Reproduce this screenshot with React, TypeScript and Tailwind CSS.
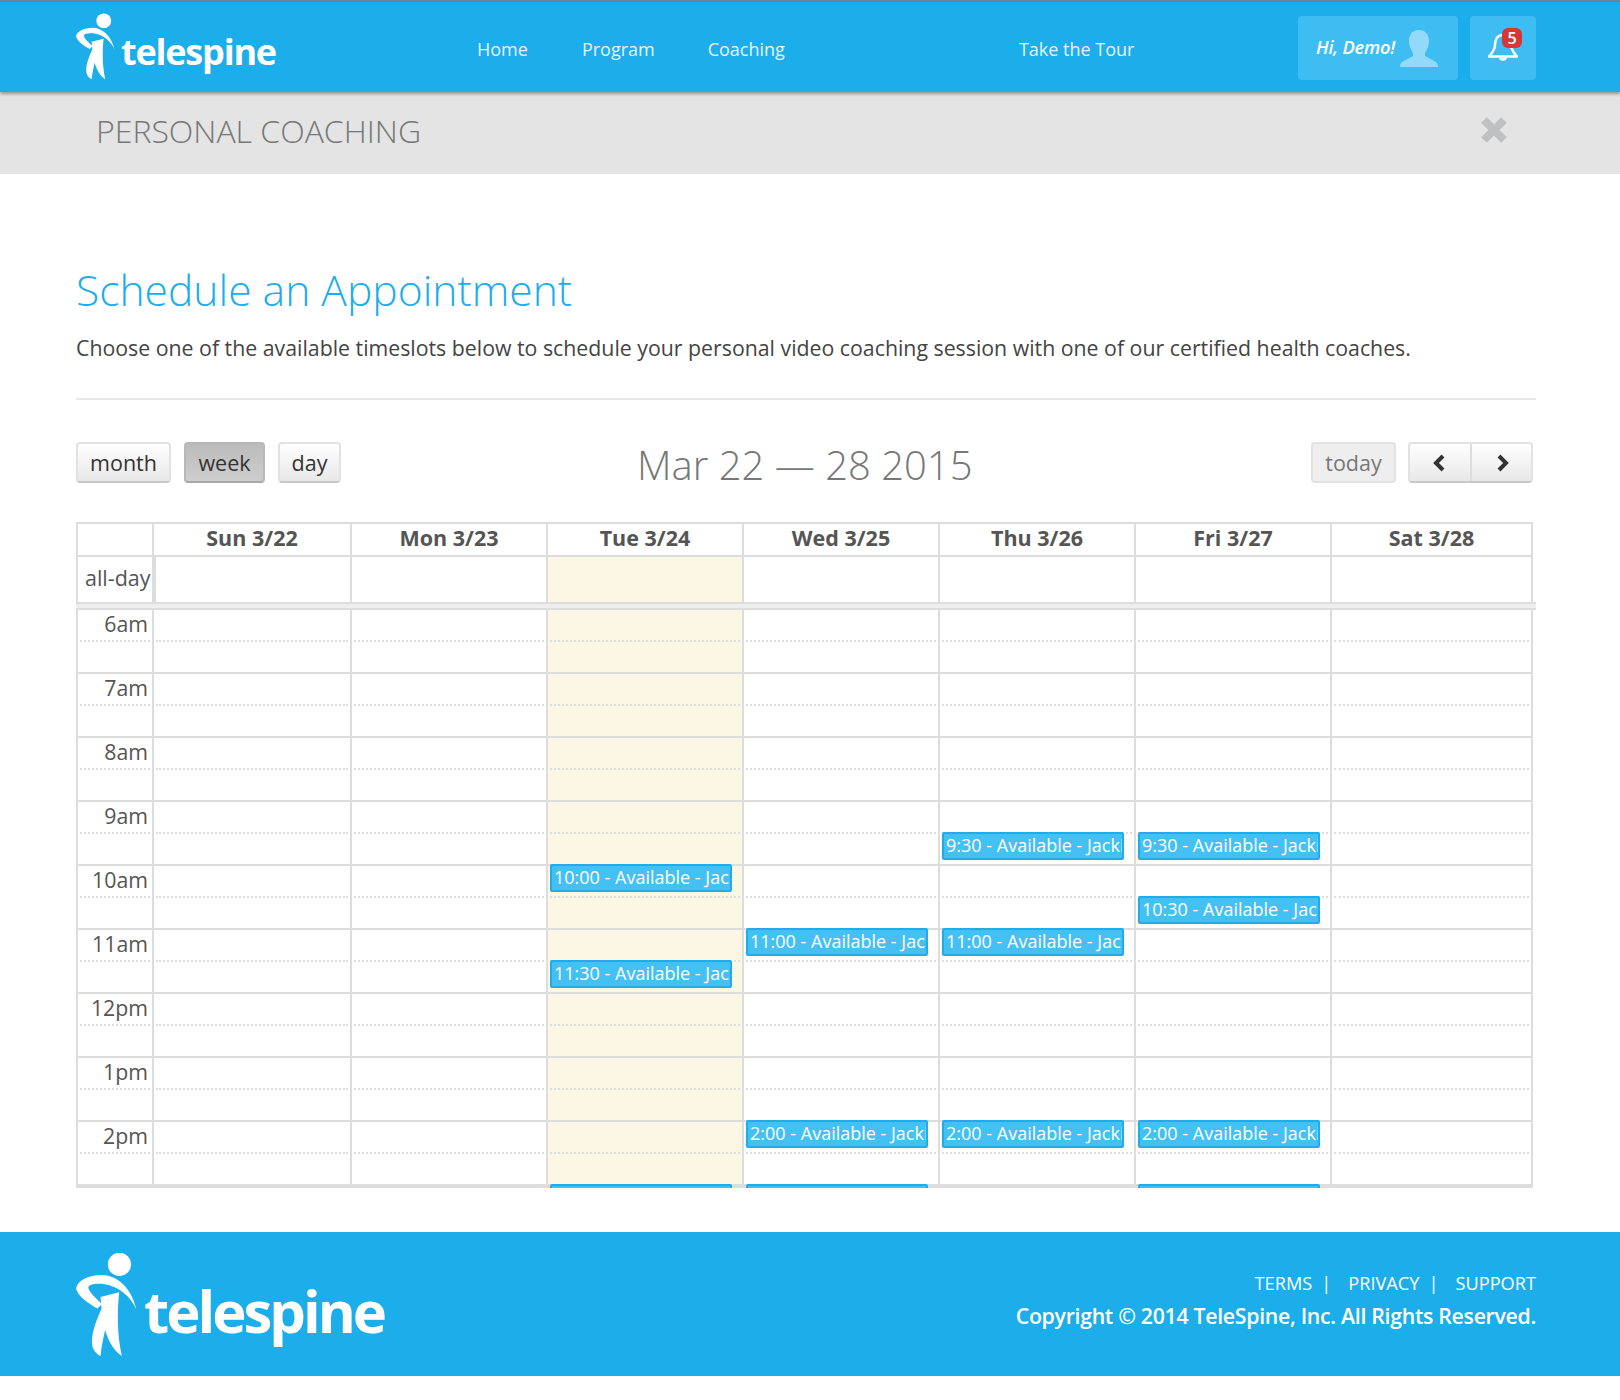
import React from "react";

const Figure = ({ className }: { className: string }) => (
  <svg viewBox="48 458 184 310" className={className} fill="#fff">
    <circle cx="179" cy="492" r="35" />
    <path d="M48 565C52 540 85 525 125 524C170 524 215 560 230 628C215 590 175 556 130 551C105 549 85 553 85 562C87 575 105 592 127 612L112 625C85 610 55 590 48 565Z" />
    <path d="M122 590L178 576C172 640 172 700 186 768C165 755 145 725 136 690C130 715 124 745 122 768C105 760 96 745 96 725C96 690 115 650 125 625Z" />
  </svg>
);

const Btn = ({ children, className = "" }: { children: React.ReactNode; className?: string }) => (
  <div className={`flex h-[41px] items-center justify-center rounded-[4px] border-2 pt-[2px] text-[21.5px] text-[#333] ${className}`}>
    {children}
  </div>
);

const idle = "border-[#e2e2e2] border-b-[#c8c8c8] bg-gradient-to-b from-white to-[#e8e8e8]";
const cols = ["Sun 3/22", "Mon 3/23", "Tue 3/24", "Wed 3/25", "Thu 3/26", "Fri 3/27", "Sat 3/28"];
const gridCols = "grid grid-cols-[76px_198px_196px_196px_196px_196px_196px_203px]";
const hours = ["6am", "7am", "8am", "9am", "10am", "11am", "12pm", "1pm", "2pm"];
const events: Record<number, [number, string][]> = {
  2: [[8, "10:00"], [11, "11:30"], [18, "3:00"]],
  3: [[10, "11:00"], [16, "2:00"], [18, "3:00"]],
  4: [[7, "9:30"], [10, "11:00"], [16, "2:00"]],
  5: [[7, "9:30"], [9, "10:30"], [16, "2:00"], [18, "3:00"]],
};

const Column = ({ index }: { index: number }) => {
  const isTime = index < 0;
  const last = index === 6;
  return (
    <div className={`relative flex flex-col border-l-2 border-[#ddd] ${last ? "border-r-2" : ""} ${index === 2 ? "bg-[#fcf7e4]" : ""}`}>
      {Array.from({ length: 18 }).map((_, i) => {
        const odd = i % 2 === 1;
        return (
          <div key={i} className={`shrink-0 ${i === 0 ? "h-[30px]" : "h-[32px]"} ${!odd && i > 0 ? "border-t-2 border-[#ddd]" : ""}`}>
            {odd && <div className="mx-[2px] border-t-2 border-dotted border-[#ddd]" />}
            {!odd && isTime && (
              <div className="h-[30px] pr-[4px] text-right text-[21.3px] leading-[28px] text-[#555]">{hours[i / 2]}</div>
            )}
          </div>
        );
      })}
      <div className="h-[4px] shrink-0 bg-[#ddd]" />
      {(events[index] || []).map(([n, t]) => (
        <div
          key={t}
          className="absolute left-[2px] h-[28px] w-[182px] overflow-hidden whitespace-nowrap rounded-[2px] border-2 border-[#1cadeb] bg-[#45c0f2] px-[2px] text-[18px] font-medium leading-[22px] text-white"
          style={{ top: 32 * n - 2 }}
        >
          {t} - Available - Jackie
        </div>
      ))}
    </div>
  );
};

export default function App() {
  return (
    <div className="min-h-[1400px] bg-white font-['Open_Sans',sans-serif]">
      <header className="relative z-10 flex h-[92px] border-t-2 border-[#6f8290] bg-[#1cadeb] shadow-[0_2px_3px_rgba(0,0,0,0.35)]">
        <div className="ml-[76px] flex w-[200px] items-start">
          <Figure className="mt-[11px] h-[67px] w-[39px] shrink-0" />
          <span className="ml-[6px] mt-[25px] text-[36px] font-bold leading-[50px] tracking-[-1.2px] text-white">telespine</span>
        </div>
        <nav className="flex text-[18px] leading-[94px] text-[#e4f5fd]">
          <span className="ml-[201px]">Home</span>
          <span className="ml-[54px]">Program</span>
          <span className="ml-[53px]">Coaching</span>
          <span className="ml-[234px]">Take the Tour</span>
        </nav>
        <div className="ml-auto mr-[84px] mt-[14px] flex h-[64px] gap-[12px]">
          <div className="flex w-[160px] items-center rounded-[4px] bg-[#3dbdf2] pl-[18px]">
            <span className="pb-[2px] text-[18.3px] font-semibold italic tracking-[-0.2px] text-white">Hi, Demo!</span>
            <svg viewBox="0 0 38 37" className="ml-[5px] h-[37px] w-[38px]" fill="#92daf8">
              <path d="M19 0C26 0 29 5 29 11C29 16 27 20 25 23V26L36 32C37 33 38 34 38 37H0C0 34 1 33 2 32L13 26V23C11 20 9 16 9 11C9 5 12 0 19 0Z" />
            </svg>
          </div>
          <div className="relative w-[66px] rounded-[4px] bg-[#3dbdf2]">
            <svg viewBox="0 0 30 28" className="absolute left-[18px] top-[17px] h-[28px] w-[30px]" fill="none" stroke="#fff" strokeWidth="2.500" strokeLinejoin="round">
              <path d="M15 2C9 2 7 7 7 12C7 17 4 20 1 23.500H29C26 20 23 17 23 12C23 7 21 2 15 2Z" />
              <path d="M12 25C13 27 17 27 18 25" />
            </svg>
            <div className="absolute left-[32px] top-[12px] flex h-[20px] w-[20px] items-center justify-center rounded-[6px] bg-[#d9363a] text-[16px] font-semibold leading-none text-white">5</div>
          </div>
        </div>
      </header>

      <div className="flex h-[82px] justify-between bg-[#e4e4e4]">
        <h2 className="ml-[96px] text-[32px] font-light leading-[78px] text-[#777]">PERSONAL COACHING</h2>
        <svg viewBox="0 0 26 26" className="mr-[113px] mt-[25px] h-[26px] w-[26px]" stroke="#bfc0c2" strokeWidth="8">
          <path d="M3 3L23 23M23 3L3 23" />
        </svg>
      </div>

      <main className="ml-[76px] w-[1460px]">
        <h1 className="mt-[83px] whitespace-nowrap text-[42.6px] font-light leading-[64px] text-[#1cadeb]">Schedule an Appointment</h1>
        <p className="mt-[9px] whitespace-nowrap text-[21.3px] leading-[36px] text-[#444]">Choose one of the available timeslots below to schedule your personal video coaching session with one of our certified health coaches.</p>
        <div className="mt-[32px] h-[2px] bg-[#e8e8e8]" />

        <div className="mt-[42px] flex h-[41px] w-[1457px] items-center">
          <Btn className={`w-[95px] ${idle}`}>month</Btn>
          <Btn className="ml-[13px] w-[81px] border-[#b8b8b8] border-b-[#a8a8a8] bg-gradient-to-b from-[#bbb] to-[#cecece]">week</Btn>
          <Btn className={`ml-[13px] w-[63px] ${idle}`}>day</Btn>
          <div className="ml-[296px] mt-[4px] whitespace-nowrap text-[40px] font-light leading-[48px] text-[#777]">Mar 22 — 28 2015</div>
          <div className="ml-auto flex gap-[12px]">
            <div className="flex h-[41px] w-[85px] items-center justify-center rounded-[4px] border-2 border-[#e2e2e2] bg-[#eee] pt-[2px] text-[21.5px] text-[#777]">today</div>
            <div className={`flex h-[41px] w-[125px] overflow-hidden rounded-[4px] border-2 ${idle}`}>
              <div className="flex w-[62px] items-center justify-center border-r-2 border-[#ddd] pr-[4px]">
                <svg viewBox="0 0 13 18" className="h-[18px] w-[13px]" fill="none" stroke="#333" strokeWidth="4"><path d="M11 2L4 9L11 16" /></svg>
              </div>
              <div className="flex flex-1 items-center justify-center pl-[4px]">
                <svg viewBox="0 0 13 18" className="h-[18px] w-[13px]" fill="none" stroke="#333" strokeWidth="4"><path d="M2 2L9 9L2 16" /></svg>
              </div>
            </div>
          </div>
        </div>

        <div className="mt-[39px] w-[1460px]">
          <div className={`${gridCols} h-[33px] w-[1457px] border-t-2 border-[#ddd]`}>
            <div className="border-l-2 border-[#ddd]" />
            {cols.map((c, i) => (
              <div key={c} className={`border-l-2 border-[#ddd] text-center text-[21.5px] font-bold leading-[27px] text-[#555] ${i === 6 ? "border-r-2" : ""}`}>{c}</div>
            ))}
          </div>
          <div className={`${gridCols} h-[47px] w-[1457px] border-t-2 border-[#ddd]`}>
            <div className="whitespace-nowrap border-l-2 border-[#ddd] pl-[7px] text-[21.5px] leading-[41px] text-[#555]">all-day</div>
            {cols.map((c, i) => (
              <div key={c} className={`${i === 0 ? "border-l-4" : "border-l-2"} border-[#ddd] ${i === 2 ? "bg-[#fcf7e4]" : ""} ${i === 6 ? "border-r-2" : ""}`} />
            ))}
          </div>
          <div className="h-[8px] border-y-2 border-[#ddd] bg-[#eee]" />
          <div className={`${gridCols} h-[578px] w-[1457px] overflow-hidden`}>
            <Column index={-1} />
            {cols.map((c, i) => (
              <Column key={c} index={i} />
            ))}
          </div>
        </div>
      </main>

      <footer className="mt-[44px] flex h-[144px] bg-[#1cadeb] pl-[76px] pr-[84px]">
        <Figure className="mt-[21px] h-[103px] w-[61px] shrink-0" />
        <span className="ml-[7px] mt-[39px] text-[58px] font-bold leading-[80px] tracking-[-3px] text-white">telespine</span>
        <div className="ml-auto mt-[36px] text-right text-white">
          <div className="text-[18.2px] font-medium leading-[30px]">
            TERMS<span className="ml-[9px] mr-[17px]">|</span>PRIVACY<span className="ml-[9px] mr-[17px]">|</span>SUPPORT
          </div>
          <div className="mt-[1px] text-[21.3px] font-semibold leading-[34px] tracking-[-0.31px]">Copyright © 2014 TeleSpine, Inc. All Rights Reserved.</div>
        </div>
      </footer>
    </div>
  );
}
